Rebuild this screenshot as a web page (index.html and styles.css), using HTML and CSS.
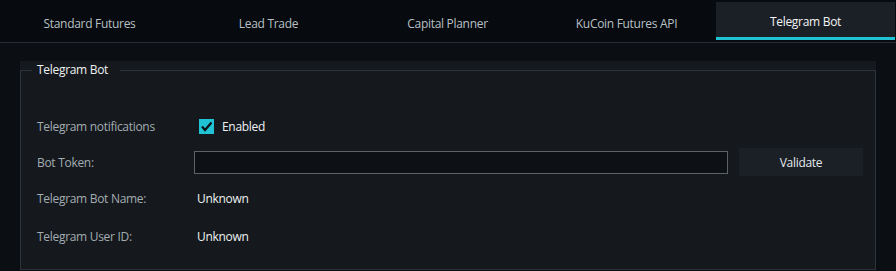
FILE: index.html
```html
<!DOCTYPE html>
<html lang="en">
<head>
  <meta charset="UTF-8" />
  <title>Telegram Bot</title>
  <link rel="stylesheet" href="styles.css">
</head>
<body>
  <nav class="tabs">
    <div class="tab">Standard Futures</div>
    <div class="tab">Lead Trade</div>
    <div class="tab">Capital Planner</div>
    <div class="tab">KuCoin Futures API</div>
    <div class="tab active">Telegram Bot</div>
  </nav>

  <main class="content">
    <div class="panel">
      <fieldset class="group">
        <legend>Telegram Bot</legend>
        <div class="form">
          <div class="label">Telegram notifications</div>
          <label class="check">
            <span class="box">
              <svg width="15" height="15" viewBox="0 0 15 15"><path d="M3 7.5 L6 11 L12.5 3.5" fill="none" stroke="#0b1014" stroke-width="2.2"/></svg>
            </span>
            Enabled
          </label>
          <div></div>

          <div class="label">Bot Token:</div>
          <input type="text" class="token" />
          <button class="validate">Validate</button>

          <div class="label">Telegram Bot Name:</div>
          <div class="value">Unknown</div>
          <div></div>

          <div class="label">Telegram User ID:</div>
          <div class="value">Unknown</div>
          <div></div>
        </div>
      </fieldset>
    </div>
  </main>
</body>
</html>
```

FILE: styles.css
```css
body {
  margin: 0;
  background: #0b0e12;
  font-family: "Open Sans", "Noto Sans", sans-serif;
  font-size: 12px;
  letter-spacing: -0.3px;
  color: #e6e9eb;
}
.tabs {
  display: grid;
  grid-template-columns: repeat(5, 179px);
  height: 42px;
  background: #070a0e;
  border-bottom: 1px solid #262c31;
}
.tab {
  display: flex;
  align-items: center;
  justify-content: center;
  color: #b9c0c5;
  margin: 2px 0;
  padding-top: 4px;
}
.tab.active {
  background: #1b2027;
  color: #f2f4f5;
  border-bottom: 3px solid #1fc3d3;
}
.content {
  padding: 18px 20px 0 20px;
}
.panel {
  background: #15191d;
}
.group {
  margin: 0;
  border: 1px solid #2b3338;
  padding: 0 12px 17px 11px;
}
.group legend {
  padding: 0 12px 0 5px;
  line-height: 18px;
  color: #eef1f3;
}
.form {
  display: grid;
  grid-template-columns: 146px 1fr 124px;
  grid-template-rows: 28px 28px 28px 32px;
  row-gap: 8px;
  column-gap: 11px;
  align-items: center;
  padding-left: 5px;
  margin-top: 33px;
}
.label {
  color: #a3acb2;
}
.check {
  display: flex;
  align-items: center;
  gap: 8px;
  margin-left: 5px;
  color: #eef1f3;
}
.box {
  width: 15px;
  height: 15px;
  background: #1fc3d3;
  display: block;
}
.box svg {
  display: block;
}
.token {
  height: 23px;
  box-sizing: border-box;
  background: #0d1014;
  border: 1px solid #5d6266;
  margin: 0;
  color: #eee;
}
.validate {
  height: 28px;
  background: #1b2027;
  border: none;
  color: #e4e9ec;
  font-family: inherit;
  font-size: 12px;
  letter-spacing: -0.3px;
}
.value {
  margin-left: 3px;
  color: #eef1f3;
}
```
